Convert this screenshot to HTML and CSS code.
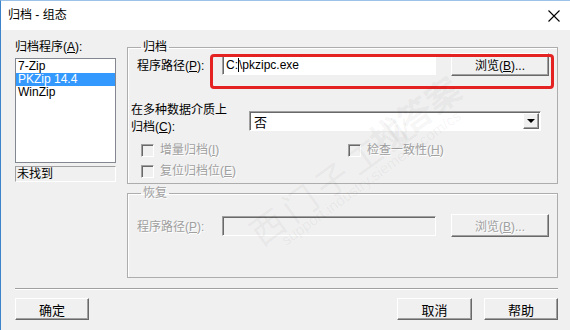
FILE: index.html
```html
<!DOCTYPE html>
<html lang="zh-CN">
<head>
    <meta charset="UTF-8">
    <title>归档 - 组态</title>
    <link rel="stylesheet" href="styles.css">
</head>
<body>

    <div class="window">
        <div class="titlebar">
            <span class="title">归档 - 组态</span>
            <svg class="close" width="12" height="12" viewBox="0 0 12 12">
                <path d="M0.5 0.5 L11.5 11.5 M11.5 0.5 L0.5 11.5" stroke="#000" stroke-width="1.1" fill="none"/>
            </svg>
        </div>

        <div class="content">
            <div class="main">
                <div class="left">
                    <div class="list-label">归档程序(<u>A</u>):</div>
                    <ul class="listbox">
                        <li>7-Zip</li>
                        <li class="selected">PKZip 14.4</li>
                        <li>WinZip</li>
                    </ul>
                    <div class="status">未找到</div>
                </div>

                <div class="right">
                    <fieldset class="group archive">
                        <legend>归档</legend>
                        <div class="path-row">
                            <label class="path-label">程序路径(<u>P</u>):</label>
                            <div class="field">C:<span class="caret"></span>\pkzipc.exe</div>
                            <button class="btn browse">浏览(<u>B</u>)...</button>
                        </div>
                        <div class="media-row">
                            <label class="media-label">在多种数据介质上<br>归档(<u>C</u>):</label>
                            <div class="select">
                                <span>否</span>
                                <span class="arrow"><i></i></span>
                            </div>
                        </div>
                        <div class="checks">
                            <div class="check disabled"><span class="box"></span>增量归档(<u>I</u>)</div>
                            <div class="check disabled"><span class="box"></span>检查一致性(<u>H</u>)</div>
                            <div class="check disabled"><span class="box"></span>复位归档位(<u>E</u>)</div>
                        </div>
                        <div class="highlight"></div>
                    </fieldset>

                    <fieldset class="group restore">
                        <legend class="disabled">恢复</legend>
                        <div class="path-row">
                            <label class="path-label disabled">程序路径(<u>P</u>):</label>
                            <div class="field empty"></div>
                            <button class="btn browse disabled">浏览(<u>B</u>)...</button>
                        </div>
                    </fieldset>
                </div>
            </div>

            <div class="separator"></div>

            <div class="buttons">
                <button class="btn action">确定</button>
                <div class="spacer"></div>
                <button class="btn action cancel">取消</button>
                <button class="btn action">帮助</button>
            </div>
        </div>

        <!-- faint forum watermark -->
        <div class="watermark">
            <span class="wm-big">找答案</span>
            <span class="wm-mid">西门子工业</span>
            <span class="wm-url">support.industry.siemens.com/cs</span>
        </div>
    </div>

</body>
</html>
```

FILE: styles.css
```css
* {
    box-sizing: border-box;
    margin: 0;
    padding: 0;
}
body {
    width: 570px;
    height: 330px;
    overflow: hidden;
    background-color: #f0f0f0;
    font-family: "Liberation Sans", "Noto Sans CJK SC", sans-serif;
    font-size: 12px;
    color: #000;
}
u {
    text-decoration-thickness: 1px;
    text-underline-offset: 1px;
}
.window {
    position: relative;
    width: 570px;
    height: 330px;
    border-left: 1px solid #3d83cc;
    border-top: 1px solid #9cc2e8;
}
.titlebar {
    height: 29px;
    background: #fff;
    display: flex;
    align-items: center;
    justify-content: space-between;
    padding: 0 10px 0 7px;
}
.title {
    font-size: 12px;
    line-height: 14px;
    margin-top: -1px;
}
.close {
    margin-top: 1px;
}
.content {
    padding: 10px 12px 0 14px;
}
.main {
    display: flex;
    gap: 11px;
}
.left {
    width: 101px;
}
.list-label {
    line-height: 14px;
}
.listbox {
    list-style: none;
    margin-top: 4px;
    height: 105px;
    background: #fff;
    border: 1px solid #828790;
    padding-top: 1px;
}
.listbox li {
    height: 13px;
    line-height: 13px;
    padding-left: 2px;
}
.listbox li.selected {
    background: #3399ff;
    color: #fff;
}
.status {
    margin-top: 3px;
    height: 16px;
    line-height: 15px;
    padding-left: 1px;
    border: 1px solid;
    border-color: #a0a0a0 #fff #fff #a0a0a0;
}
.right {
    width: 431px;
    padding-top: 1px;
}
.group {
    position: relative;
    border: 1px solid #adadad;
    box-shadow: 1px 1px 0 #fff inset;
    padding: 0 0 0 9px;
}
.group legend {
    line-height: 12px;
    padding: 0 2px;
    margin-left: 4px;
}
.archive {
    padding-bottom: 5px;
}
.restore {
    margin-top: 3px;
    padding-bottom: 40px;
}
.path-row {
    display: flex;
    align-items: center;
    height: 23px;
}
.restore .path-row {
    margin-top: 15px;
}
.path-label {
    width: 85px;
}
.field {
    width: 214px;
    height: 20px;
    background: #fff;
    border: 1px solid;
    border-color: #a0a0a0 #fff #fff #a0a0a0;
    box-shadow: 1px 1px 0 #696969 inset;
    padding-left: 3px;
    line-height: 18px;
}
.field.empty {
    background: #f0f0f0;
}
.caret {
    display: inline-block;
    width: 1px;
    height: 14px;
    background: #000;
    vertical-align: -3px;
}
.btn {
    font-family: "Liberation Sans", "Noto Sans CJK SC", sans-serif;
    font-size: 12px;
    background: #f0f0f0;
    color: #000;
    border: 1px solid;
    border-color: #fff #696969 #696969 #fff;
    box-shadow: -1px -1px 0 #a0a0a0 inset;
    height: 23px;
}
.browse {
    width: 98px;
    margin-left: 15px;
}
.media-row {
    display: flex;
    align-items: flex-start;
    margin: 26px 0 0 -6px;
}
.media-label {
    width: 118px;
    line-height: 17px;
}
.select {
    margin-top: 9px;
    width: 292px;
    height: 20px;
    background: #fff;
    border: 1px solid;
    border-color: #a0a0a0 #fff #fff #a0a0a0;
    box-shadow: 1px 1px 0 #696969 inset;
    display: flex;
    justify-content: space-between;
    align-items: center;
    padding: 1px 1px 0 4px;
    font-size: 13px;
}
.arrow {
    width: 16px;
    height: 16px;
    margin-top: -1px;
    background: #f0f0f0;
    border: 1px solid;
    border-color: #fff #696969 #696969 #fff;
    box-shadow: -1px -1px 0 #a0a0a0 inset;
    display: flex;
    align-items: center;
    justify-content: center;
}
.arrow i {
    width: 0;
    height: 0;
    border-left: 4px solid transparent;
    border-right: 4px solid transparent;
    border-top: 4px solid #000;
}
.checks {
    display: grid;
    grid-template-columns: 207px auto;
    row-gap: 7px;
    margin: 7px 0 0 4px;
}
.check {
    display: flex;
    align-items: center;
    height: 14px;
    line-height: 14px;
}
.box {
    width: 13px;
    height: 13px;
    margin-right: 6px;
    border: 1px solid;
    border-color: #a0a0a0 #fff #fff #a0a0a0;
    box-shadow: 1px 1px 0 #696969 inset;
    background: #f0f0f0;
}
.disabled {
    color: #a0a0a0;
    text-shadow: 1px 1px 0 #fff;
}
.btn.disabled {
    color: #a0a0a0;
}
.highlight {
    position: absolute;
    left: 82px;
    top: 1px;
    width: 344px;
    height: 35px;
    border: 3px solid #e52222;
    border-radius: 4px;
}
.separator {
    margin-top: 10px;
    height: 2px;
    border-top: 1px solid #a0a0a0;
    border-bottom: 1px solid #fff;
}
.buttons {
    display: flex;
    gap: 12px;
    margin-top: 8px;
}
.spacer {
    flex: 1;
}
.action {
    width: 74px;
    height: 22px;
    font-size: 13px;
}
.action.cancel {
    width: 75px;
}
.watermark {
    position: absolute;
    inset: 0;
    pointer-events: none;
    color: rgba(0, 0, 0, 0.05);
    font-family: "Noto Sans CJK SC", sans-serif;
}
.watermark span {
    position: absolute;
    white-space: nowrap;
    transform-origin: left center;
    transform: rotate(-36deg);
}
.wm-big {
    left: 372px;
    top: 118px;
    font-size: 34px;
    font-weight: bold;
}
.wm-mid {
    left: 252px;
    top: 210px;
    font-size: 34px;
    letter-spacing: 6px;
}
.wm-url {
    left: 282px;
    top: 232px;
    font-size: 15px;
    font-family: "Liberation Sans", sans-serif;
}
```
